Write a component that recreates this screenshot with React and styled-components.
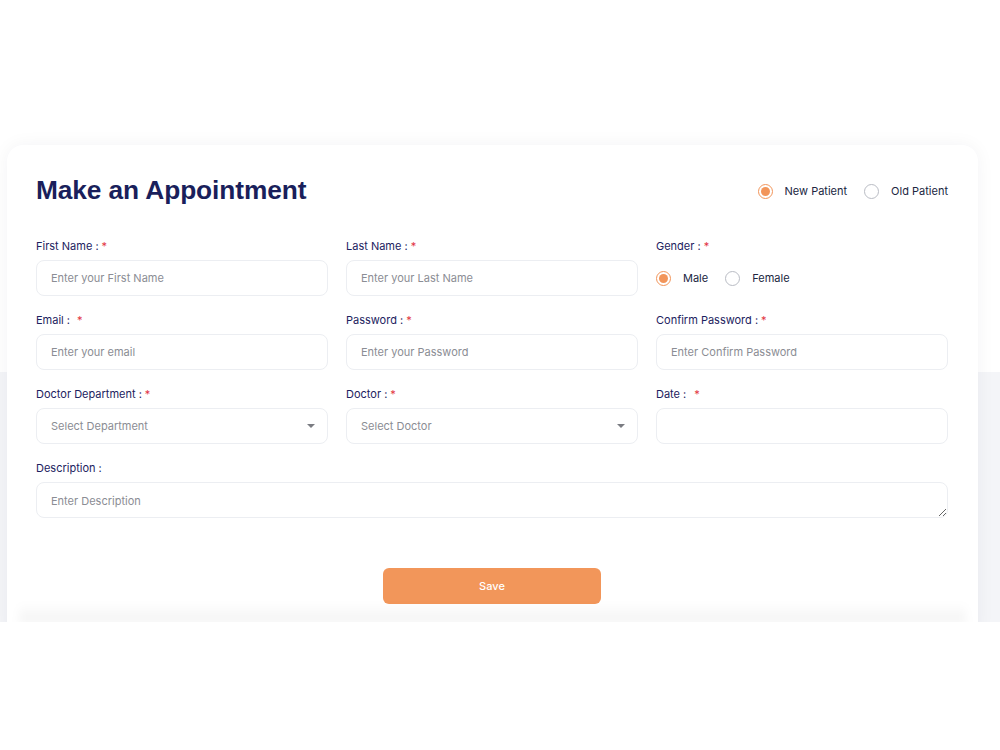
import React, { useState } from "react";
import styled, { createGlobalStyle } from "styled-components";

const GlobalStyle = createGlobalStyle`
  html, body { margin: 0; padding: 0; background: #ffffff; }
  body { font-family: "Inter", "Noto Sans", sans-serif; }
  * { box-sizing: border-box; }
`;

const Section = styled.section`
  height: 622px;
  overflow: hidden;
  padding: 145px 22px 0 7px;
  background: linear-gradient(to bottom, #ffffff 0, #ffffff 372px, #f4f5f8 372px);
`;

const Card = styled.div`
  position: relative;
  background: #ffffff;
  border-radius: 16px;
  box-shadow: 0 0 18px rgba(20, 30, 60, 0.05);
  padding: 28px 30px 40px 29px;

  &::after {
    content: "";
    position: absolute;
    left: 12px;
    right: 12px;
    top: 458px;
    height: 20px;
    background: linear-gradient(to bottom, rgba(0, 0, 0, 0), rgba(0, 0, 0, 0.05));
    filter: blur(4px);
    pointer-events: none;
  }
`;

const Header = styled.div`
  display: flex;
  align-items: center;
  justify-content: space-between;
  height: 36px;
  margin-bottom: 28px;
`;

const Title = styled.h2`
  margin: 0;
  font-family: "Liberation Sans", Arial, sans-serif;
  font-weight: 700;
  font-size: 26.3px;
  color: #1a1f5b;
  letter-spacing: -0.1px;
  transform: translateY(-1px);
`;

const RadioGroup = styled.div`
  display: flex;
  align-items: center;
  gap: ${(p) => p.$gap || 17}px;
`;

const RadioLabel = styled.label`
  display: flex;
  align-items: center;
  gap: 12px;
  font-size: 11px;
  color: #20263f;
  cursor: pointer;
`;

const RadioCircle = styled.span`
  width: 15px;
  height: 15px;
  border-radius: 50%;
  border: 1.5px solid ${(p) => (p.$on ? "#f2955a" : "#b9bcc4")};
  display: flex;
  align-items: center;
  justify-content: center;
  flex-shrink: 0;

  &::before {
    content: "";
    width: 9px;
    height: 9px;
    border-radius: 50%;
    background: ${(p) => (p.$on ? "#f2955a" : "transparent")};
  }
`;

const Grid = styled.div`
  display: grid;
  grid-template-columns: repeat(3, 1fr);
  column-gap: 18px;
  row-gap: 15px;
`;

const Field = styled.div`
  display: flex;
  flex-direction: column;
  gap: 7px;
  grid-column: ${(p) => (p.$full ? "1 / -1" : "auto")};
`;

const Label = styled.span`
  font-size: 11px;
  line-height: 16px;
  color: #1c2260;
  transform: translateY(1px);
`;

const Star = styled.span`
  color: #e2343f;
  margin-left: ${(p) => p.$space || 3}px;
`;

const inputBase = `
  width: 100%;
  height: 36px;
  border: 1px solid #eceef2;
  border-radius: 8px;
  background: #ffffff;
  padding: 0 14px;
  font-family: "Inter", "Noto Sans", sans-serif;
  font-size: 11px;
  color: #333;
  outline: none;
  &::placeholder { color: #8b8d94; }
`;

const Input = styled.input`
  ${inputBase}
`;

const SelectBox = styled.div`
  ${inputBase}
  display: flex;
  align-items: center;
  justify-content: space-between;
  color: #8b8d94;
  padding-right: 12px;
`;

const Caret = styled.span`
  width: 0;
  height: 0;
  border-left: 4px solid transparent;
  border-right: 4px solid transparent;
  border-top: 4px solid #7a7c82;
`;

const TextArea = styled.textarea`
  ${inputBase}
  height: 36px;
  padding-top: 11px;
  resize: vertical;
  display: block;
`;

const GenderRow = styled.div`
  height: 36px;
  display: flex;
  align-items: center;
`;

const Actions = styled.div`
  display: flex;
  justify-content: center;
  margin-top: 50px;
`;

const SaveButton = styled.button`
  width: 218px;
  height: 36px;
  border: none;
  border-radius: 6px;
  background: #f2965a;
  color: #ffffff;
  font-family: "Inter", "Noto Sans", sans-serif;
  font-size: 11px;
  font-weight: 500;
  cursor: pointer;
`;

function Radio({ on, children, onClick }) {
  return (
    <RadioLabel onClick={onClick}>
      <RadioCircle $on={on} />
      {children}
    </RadioLabel>
  );
}

function Req({ children, space }) {
  return (
    <Label>
      {children}
      <Star $space={space}>*</Star>
    </Label>
  );
}

export default function App() {
  const [patient, setPatient] = useState("new");
  const [gender, setGender] = useState("male");

  return (
    <>
      <GlobalStyle />
      <Section>
        <Card>
          <Header>
            <Title>Make an Appointment</Title>
            <RadioGroup $gap={17}>
              <Radio on={patient === "new"} onClick={() => setPatient("new")}>New Patient</Radio>
              <Radio on={patient === "old"} onClick={() => setPatient("old")}>Old Patient</Radio>
            </RadioGroup>
          </Header>

          <Grid>
            <Field>
              <Req>First Name :</Req>
              <Input placeholder="Enter your First Name" />
            </Field>
            <Field>
              <Req>Last Name :</Req>
              <Input placeholder="Enter your Last Name" />
            </Field>
            <Field>
              <Req>Gender :</Req>
              <GenderRow>
                <RadioGroup $gap={17}>
                  <Radio on={gender === "male"} onClick={() => setGender("male")}>Male</Radio>
                  <Radio on={gender === "female"} onClick={() => setGender("female")}>Female</Radio>
                </RadioGroup>
              </GenderRow>
            </Field>

            <Field>
              <Req space={7}>Email :</Req>
              <Input placeholder="Enter your email" />
            </Field>
            <Field>
              <Req>Password :</Req>
              <Input type="password" placeholder="Enter your Password" />
            </Field>
            <Field>
              <Req>Confirm Password :</Req>
              <Input type="password" placeholder="Enter Confirm Password" />
            </Field>

            <Field>
              <Req>Doctor Department :</Req>
              <SelectBox>
                Select Department
                <Caret />
              </SelectBox>
            </Field>
            <Field>
              <Req>Doctor :</Req>
              <SelectBox>
                Select Doctor
                <Caret />
              </SelectBox>
            </Field>
            <Field>
              <Req space={8}>Date :</Req>
              <Input />
            </Field>

            <Field $full>
              <Label>Description :</Label>
              <TextArea rows={1} placeholder="Enter Description" />
            </Field>
          </Grid>

          <Actions>
            <SaveButton>Save</SaveButton>
          </Actions>
        </Card>
      </Section>
    </>
  );
}
